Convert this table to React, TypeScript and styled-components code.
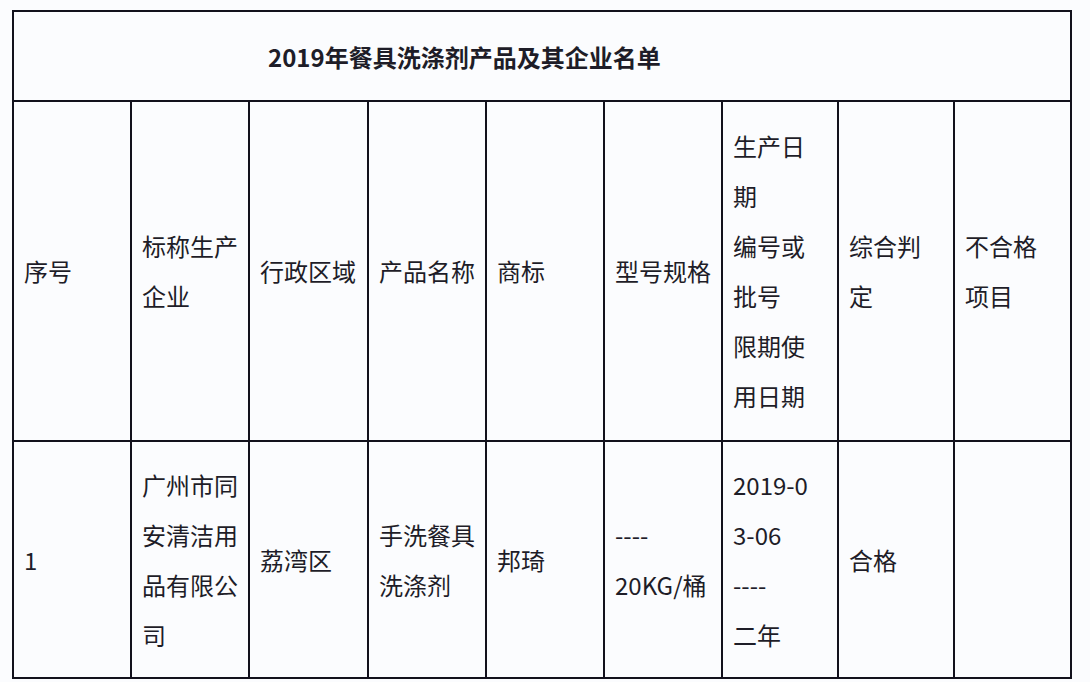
import * as React from 'react'
import styled, { createGlobalStyle } from 'styled-components'

const GlobalStyle = createGlobalStyle`
  html, body {
    margin: 0;
    padding: 0;
    background: #fbfcfe;
  }
  body {
    font-family: 'Noto Sans CJK SC', 'Noto Sans', sans-serif;
    color: #1e1d28;
  }
`

const Page = styled.div`
  padding: 10px 20px 0 12px;
`

const Table = styled.table`
  width: 1058px;
  table-layout: fixed;
  border-collapse: collapse;
  border: 2px solid #12111c;
`

const Col = styled.col<{ $w: number }>`
  width: ${p => p.$w}px;
`

const TitleCell = styled.td`
  height: 88px;
  padding: 0 0 0 254px;
  border: 2px solid #12111c;
  font-size: 24px;
  font-weight: 700;
  vertical-align: middle;
  text-align: left;
`

const Cell = styled.td<{ $h: number }>`
  height: ${p => p.$h}px;
  padding: 0 4px 0 10px;
  border: 2px solid #12111c;
  font-size: 24px;
  line-height: 50px;
  vertical-align: middle;
  text-align: left;
  white-space: nowrap;
  overflow: hidden;
`

const Line = styled.div`
  display: block;
`

const widths = [118, 118, 119, 118, 118, 118, 116, 116, 117]

const header: string[][] = [
  ['序号'],
  ['标称生产', '企业'],
  ['行政区域'],
  ['产品名称'],
  ['商标'],
  ['型号规格'],
  ['生产日', '期', '编号或', '批号', '限期使', '用日期'],
  ['综合判', '定'],
  ['不合格', '项目'],
]

const row: string[][] = [
  ['1'],
  ['广州市同', '安清洁用', '品有限公', '司'],
  ['荔湾区'],
  ['手洗餐具', '洗涤剂'],
  ['邦琦'],
  ['----', '20KG/桶'],
  ['2019-0', '3-06', '----', '二年'],
  ['合格'],
  [],
]

const Lines = ({ lines }: { lines: string[] }) => (
  <>
    {lines.map((l, i) => (
      <Line key={i}>{l}</Line>
    ))}
  </>
)

export default function App() {
  return (
    <Page>
      <GlobalStyle />
      <Table>
        <colgroup>
          {widths.map((w, i) => (
            <Col key={i} $w={w} />
          ))}
        </colgroup>
        <tbody>
          <tr>
            <TitleCell colSpan={9}>2019年餐具洗涤剂产品及其企业名单</TitleCell>
          </tr>
          <tr>
            {header.map((lines, i) => (
              <Cell key={i} $h={338}>
                <Lines lines={lines} />
              </Cell>
            ))}
          </tr>
          <tr>
            {row.map((lines, i) => (
              <Cell key={i} $h={235}>
                <Lines lines={lines} />
              </Cell>
            ))}
          </tr>
        </tbody>
      </Table>
    </Page>
  )
}
